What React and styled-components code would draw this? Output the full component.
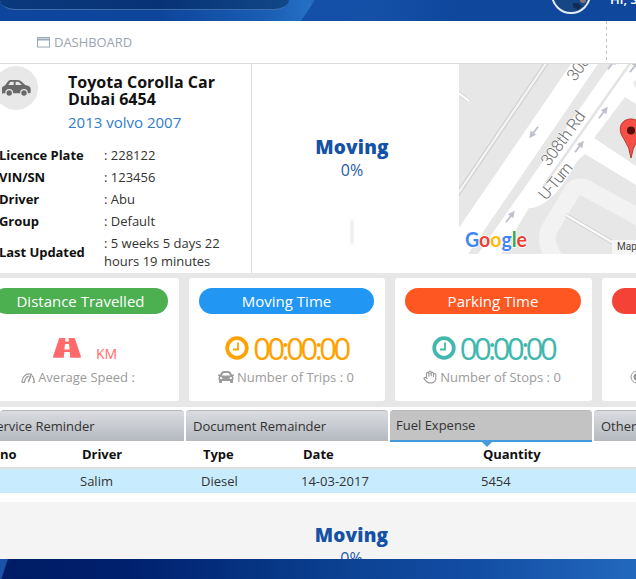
import React from 'react';
import styled, { createGlobalStyle } from 'styled-components';
import { FaCar } from 'react-icons/fa';
import { Hand } from 'lucide-react';

const Global = createGlobalStyle`
  * { box-sizing: border-box; }
  body { margin: 0; overflow: hidden; background: #fff; font-family: "Open Sans", sans-serif; font-size: 13px; color: #333; }
`;

const Page = styled.div`
  width: 636px; height: 579px; overflow: hidden; display: flex; flex-direction: column;
`;

const TopBar = styled.header`
  position: relative; height: 21px; flex: none; overflow: hidden; display: flex;
  background: linear-gradient(90deg, #0e469e 0, #0e459b 160px, #1b5eb5 270px, #2670c6 310px, #1451a8 322px, #1450a6 380px, #0e479c 460px, #0f479c 636px);
`;
const Sheen = styled.svg`position: absolute; left: 0; top: 0;`;
const SearchField = styled.div`
  width: 289px; height: 10px; border-radius: 0 0 15px 15px / 0 0 10px 10px; flex: none; position: relative;
  background: linear-gradient(90deg, #0b397d, #083276 55%, #104887);
  border-bottom: 1px solid #3d70ab;
`;
const Avatar = styled.div`
  position: relative; width: 40px; height: 40px; margin: -26px 0 0 262px; flex: none;
  border: 2px solid #e4ebf5; border-radius: 50%; background: #174684; overflow: hidden;
`;
const Greeting = styled.div`
  position: relative; margin: -10px 0 0 19px; color: #fff; font-size: 13px; line-height: 18px; font-weight: 600; white-space: nowrap;
`;

const Crumbs = styled.nav`
  height: 43px; flex: none; display: flex; align-items: center; padding-left: 37px; gap: 4px;
  border-bottom: 1px solid #dcdcdc; color: #9ba5b4; font-size: 13px; letter-spacing: -0.05px;
`;
const CrumbDivider = styled.span`
  margin-left: auto; margin-right: 29px; width: 1px; height: 42px;
  background: repeating-linear-gradient(#c4c4c4 0 3px, transparent 3px 6px);
`;

const Overview = styled.section`height: 209px; flex: none; display: flex;`;
const VehiclePanel = styled.div`width: 252px; flex: none; border-right: 1px solid #dedede;`;
const VehicleHead = styled.div`height: 80px; display: flex;`;
const VehicleBadge = styled.div`
  width: 44px; height: 44px; margin: 2px 24px 0 -6px; border-radius: 50%; background: #e8e8e8; flex: none; padding: 13px 0 0 7px;
`;
const VehicleTitles = styled.div`padding: 10px 0 0 6px;`;
const VehicleName = styled.h1`
  margin: 0; font-size: 16px; line-height: 17px; font-weight: 700; color: #111; white-space: nowrap;
`;
const VehicleModel = styled.div`margin-top: 3px; font-size: 15px; line-height: 22px; color: #327dcb;`;
const Facts = styled.dl`margin: 0; display: grid; grid-template-columns: 104px 147px; grid-auto-rows: minmax(22px, auto);`;
const FactLabel = styled.dt`font-weight: 700; color: #111; align-self: center; margin-left: -1px; white-space: nowrap; line-height: 18px; letter-spacing: -0.05px;`;
const FactValue = styled.dd`margin: 0; align-self: center; line-height: 18px; white-space: pre-line;`;
const LongLabel = styled(FactLabel)`padding-top: 2px;`;
const LongValue = styled(FactValue)`padding-top: 2px;`;

const StatusPanel = styled.div`
  width: 207px; flex: none; display: flex; flex-direction: column; align-items: center; padding-top: 71px; padding-right: 7px;
`;
const StatusName = styled.div`font-size: 19px; line-height: 24px; font-weight: 800; color: #1552a5; letter-spacing: 0.15px;`;
const StatusPercent = styled.div`font-size: 16px; line-height: 22px; color: #1e5cad;`;
const GaugeMark = styled.div`width: 4px; height: 26px; margin-top: 38px; background: #f2f2f2; border-radius: 2px;`;
const MapView = styled.svg`display: block; flex: none; width: 177px; height: 190px;`;

const Stats = styled.section`
  height: 134px; flex: none; background: #e7e7e7; padding: 5px 0 5px; display: flex; gap: 10px; overflow: hidden;
`;
const StatCard = styled.article`
  width: ${(p) => p.$width}px; margin-left: ${(p) => p.$offset || 0}px; flex: none; height: 123px; background: #fff; border-radius: 3px;
  padding: 10px 11px 0 10px; display: flex; flex-direction: column; align-items: center;
`;
const StatTitle = styled.h2`
  margin: 0; width: 100%; height: 26px; border-radius: 13px; background: ${(p) => p.$color}; color: #fff;
  font-size: 15px; line-height: 26px; font-weight: 400; text-align: center; white-space: nowrap;
`;
const StatValue = styled.div`
  height: 36px; margin-top: 16px; padding-left: ${(p) => p.$shift || 0}px; display: flex; align-items: center;
  gap: ${(p) => p.$gap}px; color: ${(p) => p.$color};
`;
const TimeText = styled.span`font-size: 31px; line-height: 36px; letter-spacing: -3.5px;`;
const UnitText = styled.span`font-size: 14px; line-height: 18px; padding-top: 11px;`;
const StatNote = styled.div`
  margin-top: 2px; padding-right: ${(p) => p.$shift || 0}px; display: flex; align-items: center; gap: 3px;
  font-size: 13px; line-height: 18px; color: #9b9b9b; white-space: nowrap;
`;

const Tabs = styled.nav`
  height: 34px; flex: none; padding-top: 3px; display: flex; gap: 2px; align-items: flex-start;
`;
const Tab = styled.div`
  width: ${(p) => p.$width}px; height: ${(p) => (p.$active ? 32 : 31)}px; flex: none; position: relative;
  text-indent: ${(p) => p.$inset}px; line-height: ${(p) => (p.$active ? 29 : 31)}px; border-radius: 4px 4px 0 0; color: #333;
  background: ${(p) => (p.$active ? '#c3c3c3' : 'linear-gradient(#dadce0, #b5b9c0)')};
  border-bottom: ${(p) => (p.$active ? '2px solid #439bdc' : '0')};
  border-top: 1px solid #b7b8bb; white-space: nowrap;
  &::after {
    content: ''; display: ${(p) => (p.$active ? 'block' : 'none')}; position: absolute; left: 92px; top: 31px;
    border: 5px solid transparent; border-top-color: #439bdc; border-bottom: 0;
  }
`;

const TableRow = styled.div`
  height: ${(p) => (p.$head ? 28 : 24)}px; flex: none; display: grid; grid-template-columns: 80px 121px 100px 180px 155px;
  background: ${(p) => (p.$head ? '#fff' : '#c8ecfe')}; color: ${(p) => (p.$head ? '#111' : '#333')};
  font-weight: ${(p) => (p.$head ? 700 : 400)}; letter-spacing: ${(p) => (p.$head ? '-0.05px' : 'normal')};
  line-height: ${(p) => (p.$head ? 27 : 25)}px;
  border-bottom: ${(p) => (p.$head ? '2px solid #dfdfdf' : '0')};
`;
const Cell = styled.div`white-space: nowrap; padding-left: ${(p) => p.$inset || 0}px;`;

const Repeat = styled.section`
  height: 57px; flex: none; margin-top: 9px; background: #f4f4f4; overflow: hidden;
  display: flex; flex-direction: column; align-items: center; padding: 21px 0 0 67px;
`;
const Footer = styled.footer`
  height: 20px; flex: none;
  background: linear-gradient(108deg, #1952a6 0 7px, transparent 8px),
    linear-gradient(90deg, #001c66 0, #001f6c 120px, #04307f 230px, #0c4293 350px, #134ea5 480px, #2269bd 636px);
`;

const Clock = () => (
  <svg width="24" height="24" viewBox="0 0 24 24" fill="none" stroke="currentColor">
    <circle cx="12" cy="12" r="9.8" strokeWidth="3.7" />
    <path d="M13 6.5v7H8" strokeWidth="1.8" />
  </svg>
);

const Road = () => (
  <svg width="28" height="20" viewBox="0 0 28 20" fill="currentColor">
    <path fillRule="evenodd" d="M7 0H12.4L12.2 3.5H15.8L15.6 0H21Q21.7 0 22 .8L27.8 18Q28.3 19.7 27 19.7H17.2L16.7 14H11.3L10.8 19.7H1Q-.3 19.7.2 18L6 .8Q6.3 0 7 0ZM12 6 11.4 11.5H16.6L16 6Z" />
  </svg>
);

const Speed = () => (
  <svg width="14" height="14" viewBox="0 0 14 14" fill="none" stroke="currentColor" strokeWidth="1.2">
    <path d="M.8 12.3C1.2 7 4.5 3.4 9 4M.8 12.3h2.6C4 9 5.5 6.8 7.8 6.2M11 5.6c1.7 1.5 2.3 3.7 2.3 6.7h-1.6" />
    <path d="M7.8 11 10.4 3.6M7.2 12 8.2 10" strokeWidth="1.6" />
  </svg>
);

const SideCar = () => (
  <svg width="30" height="18" viewBox="0 0 30 18" fill="#696969">
    <path fillRule="evenodd" d="M1 15V9Q1 7 4 6.4L7.2 2Q8.2.9 10 .9H17Q19 .9 20.4 2.4L24.2 6.1 27 6.8Q29.7 7.5 29.7 10V13.3Q29.7 14.3 28 14.3H1.8ZM8.9 3.4 7.4 6h5.3V2.8H9.9Q9.3 2.8 8.9 3.4ZM14.6 2.8V6h6.2L18.4 3.4Q17.8 2.8 17 2.8Z" />
    <g fill="#696969" stroke="#e8e8e8" strokeWidth="1.2">
      <circle cx="8.2" cy="14" r="3.3" /><circle cx="23" cy="14" r="3.3" />
    </g>
  </svg>
);

const arrows = [
  { x: 75, y: 68, r: 128 }, { x: 144, y: 49, r: -52 }, { x: 120, y: 83, r: -52 },
  { x: 51, y: 153, r: -52 }, { x: 153, y: 0, r: -52 }, { x: 175, y: 3, r: -52 },
];

const StreetMap = () => (
  <MapView viewBox="0 0 177 190">
    <rect width="177" height="190" fill="#e7e7e7" />
    <g fill="none">
      <path d="M88 -2 -2 131" stroke="#cfcfcf" strokeWidth="4.6" />
      <path d="M88 -2 -2 131" stroke="#f3f3f3" strokeWidth="2.4" />
      <path d="M-2 28 10 37" stroke="#d0d0d0" strokeWidth="4" />
      <path d="M-2 28 10 37" stroke="#fff" strokeWidth="2.4" />
      <path d="M99 200Q84 178 90 166L112 129Q118 119 128 125L187 157" stroke="#f2f2f2" strokeWidth="17" />
      <path d="M107 151 156 180" stroke="#cfcfcf" strokeWidth="4" />
      <path d="M107 151 156 180" stroke="#fafafa" strokeWidth="2.4" />
    </g>
    <path d="M112 0H139L9 190H-18ZM152 0H177V40L166 33 135 74 177 102V121L126 90 118 97Q96 139 74 144H70L42 190H19Z" fill="#fff" />
    <path d="M174 19 177 16V24Z" fill="#e7e7e7" />
    <path d="M84 123 172 -2" stroke="#e4e4e4" strokeWidth="2.6" />
    <g stroke="#bfc1cf" fill="#bfc1cf" strokeWidth="2">
      {arrows.map((a) => (
        <path key={`${a.x}-${a.y}`} transform={`translate(${a.x} ${a.y}) rotate(${a.r}) scale(.95)`} d="M-7 0H3M2-2 6 0 2 2Z" />
      ))}
    </g>
    <g fontFamily="Roboto, sans-serif" fontSize="16.5" fill="#6c6c6c" stroke="#fff" strokeWidth="1" paintOrder="stroke" fontWeight="300">
      <text transform="translate(90 103) rotate(-54)" textLength="63">308th Rd</text>
      <text transform="translate(116 18) rotate(-54)" textLength="63">308th Rd</text>
      <text transform="translate(87 137) rotate(-50)" textLength="43">U-Turn</text>
    </g>
    <path d="M172 94Q171 84 165 75C157 64 163 55 172 55S187 64 179 75Q173 85 172 94Z" fill="#f64f46" stroke="#b9332d" />
    <circle cx="172" cy="66.500" r="4" fill="#58100e" />
    <text x="6" y="183" fontFamily="Lato, sans-serif" fontSize="21.5" textLength="62" lengthAdjust="spacingAndGlyphs" fontWeight="700" stroke="#fff" strokeWidth="1.6" paintOrder="stroke">
      <tspan fill="#4285f4">G</tspan><tspan fill="#ea4335">o</tspan><tspan fill="#fbbc05">o</tspan><tspan fill="#4285f4">g</tspan><tspan fill="#34a853">l</tspan><tspan fill="#ea4335">e</tspan>
    </text>
    <rect x="153" y="176" width="24" height="14" fill="#f5f5f5" />
    <text x="158" y="186" fontFamily="Roboto, sans-serif" fontSize="10" fill="#444">Map data</text>
  </MapView>
);

const facts = [['Licence Plate', ': 228122'], ['VIN/SN', ': 123456'], ['Driver', ': Abu'], ['Group', ': Default']];

export default function App() {
  return (
    <Page>
      <Global />
      <TopBar>
        <Sheen width="636" height="21"><path d="M301 21 315 0H380L345 21Z" fill="#1450a7" /></Sheen>
        <SearchField />
        <Avatar>
          <svg width="36" height="36" viewBox="0 0 36 36"><path d="M20 27h5l4 3-4 4-5-3z" fill="#102c56" /><circle cx="30" cy="24" r="3" fill="#8c7674" /></svg>
        </Avatar>
        <Greeting>Hi, Salim</Greeting>
      </TopBar>
      <Crumbs>
        <svg width="13" height="11" viewBox="0 0 13 11" fill="none" stroke="#9da8b7"><rect x=".5" y=".5" width="12" height="9.5" /><path d="M1 2.5h11" strokeWidth="2" /></svg>
        <span>DASHBOARD</span>
        <CrumbDivider />
      </Crumbs>
      <Overview>
        <VehiclePanel>
          <VehicleHead>
            <VehicleBadge><SideCar /></VehicleBadge>
            <VehicleTitles>
              <VehicleName>Toyota Corolla Car<br />Dubai 6454</VehicleName>
              <VehicleModel>2013 volvo 2007</VehicleModel>
            </VehicleTitles>
          </VehicleHead>
          <Facts>
            {facts.map(([label, value]) => (
              <React.Fragment key={label}><FactLabel>{label}</FactLabel><FactValue>{value}</FactValue></React.Fragment>
            ))}
            <LongLabel>Last Updated</LongLabel>
            <LongValue>{': 5 weeks 5 days 22\nhours 19 minutes'}</LongValue>
          </Facts>
        </VehiclePanel>
        <StatusPanel>
          <StatusName>Moving</StatusName>
          <StatusPercent>0%</StatusPercent>
          <GaugeMark />
        </StatusPanel>
        <StreetMap />
      </Overview>
      <Stats>
        <StatCard $width={196} $offset={-17}>
          <StatTitle $color="#4caf50">Distance Travelled</StatTitle>
          <StatValue $color="#ff6b6b" $gap={15} $shift={9}><Road /><UnitText>KM</UnitText></StatValue>
          <StatNote $shift={5}><Speed />Average Speed :</StatNote>
        </StatCard>
        <StatCard $width={196}>
          <StatTitle $color="#2196f3">Moving Time</StatTitle>
          <StatValue $color="#ffa200" $gap={4}><Clock /><TimeText>00:00:00</TimeText></StatValue>
          <StatNote $shift={1}><FaCar size={16} />Number of Trips : 0</StatNote>
        </StatCard>
        <StatCard $width={197}>
          <StatTitle $color="#ff5722">Parking Time</StatTitle>
          <StatValue $color="#42b7ae" $gap={4}><Clock /><TimeText>00:00:00</TimeText></StatValue>
          <StatNote $shift={2}><Hand size={14} strokeWidth={2} />Number of Stops : 0</StatNote>
        </StatCard>
        <StatCard $width={197}>
          <StatTitle $color="#f44336" />
          <StatValue $gap={0} />
          <StatNote $shift={4}>
            <svg width="14" height="14" viewBox="0 0 14 14"><circle cx="7" cy="7" r="6" fill="none" stroke="#999" /><circle cx="7" cy="7" r="3.5" fill="#999" /></svg>
            Idle Duration : 0000
          </StatNote>
        </StatCard>
      </Stats>
      <Tabs>
        <Tab $width={184} $inset={-11}>Service Reminder</Tab>
        <Tab $width={202} $inset={7}>Document Remainder</Tab>
        <Tab $width={202} $inset={6} $active>Fuel Expense</Tab>
        <Tab $width={190} $inset={7}>Other Expense</Tab>
      </Tabs>
      <TableRow $head>
        <Cell>no</Cell><Cell $inset={2}>Driver</Cell><Cell $inset={2}>Type</Cell><Cell $inset={2}>Date</Cell><Cell $inset={2}>Quantity</Cell>
      </TableRow>
      <TableRow>
        <Cell /><Cell>Salim</Cell><Cell>Diesel</Cell><Cell>14-03-2017</Cell><Cell>5454</Cell>
      </TableRow>
      <Repeat><StatusName>Moving</StatusName><StatusPercent>0%</StatusPercent></Repeat>
      <Footer />
    </Page>
  );
}
